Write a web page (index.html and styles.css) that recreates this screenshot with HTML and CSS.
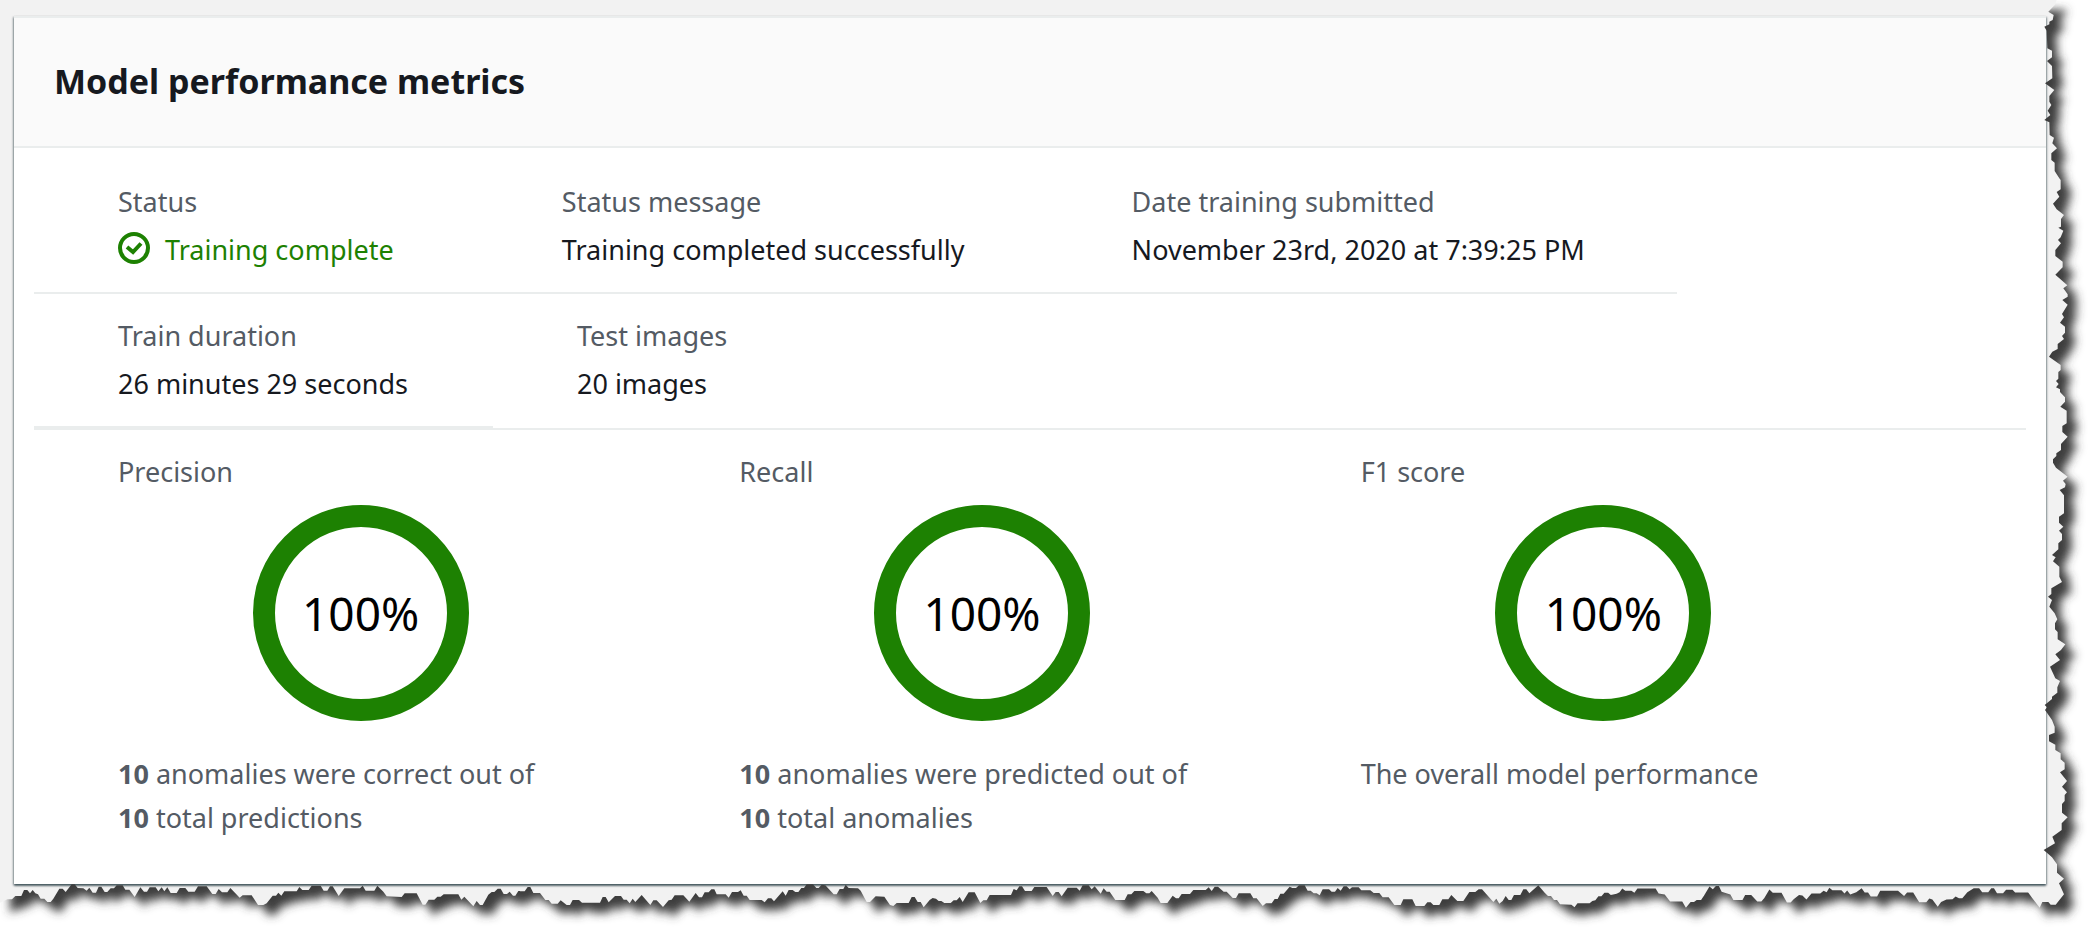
FILE: index.html
```html
<!DOCTYPE html>
<html lang="en">
<head>
<meta charset="utf-8">
<title>Model performance metrics</title>
<link rel="stylesheet" href="styles.css">
</head>
<body>
<main class="page">
  <section class="card">
    <header class="card-header">
      <h2 class="card-title">Model performance metrics</h2>
    </header>
    <div class="card-body">
      <dl class="row row-status">
        <div class="field">
          <dt class="label">Status</dt>
          <dd class="value value-success">
            <svg class="check" viewBox="0 0 32 32" aria-hidden="true">
              <circle cx="16" cy="16" r="14"/>
              <path d="M9 15l6 5 8-8.500"/>
            </svg>
            <span>Training complete</span>
          </dd>
        </div>
        <div class="field">
          <dt class="label">Status message</dt>
          <dd class="value">Training completed successfully</dd>
        </div>
        <div class="field">
          <dt class="label">Date training submitted</dt>
          <dd class="value">November 23rd, 2020 at 7:39:25 PM</dd>
        </div>
      </dl>
      <dl class="row row-duration">
        <div class="field field-ruled">
          <dt class="label">Train duration</dt>
          <dd class="value">26 minutes 29 seconds</dd>
        </div>
        <div class="field">
          <dt class="label">Test images</dt>
          <dd class="value">20 images</dd>
        </div>
      </dl>
      <div class="scores">
        <div class="score">
          <h3 class="label">Precision</h3>
          <div class="ring">100%</div>
          <p class="note"><b>10</b> anomalies were correct out of<br><b>10</b> total predictions</p>
        </div>
        <div class="score">
          <h3 class="label">Recall</h3>
          <div class="ring">100%</div>
          <p class="note"><b>10</b> anomalies were predicted out of<br><b>10</b> total anomalies</p>
        </div>
        <div class="score">
          <h3 class="label">F1 score</h3>
          <div class="ring">100%</div>
          <p class="note">The overall model performance</p>
        </div>
      </div>
    </div>
  </section>
  <svg class="torn-edge" viewBox="0 0 6264 2784" preserveAspectRatio="none" aria-hidden="true">
    <defs>
      <g id="paper">
        <rect x="0" y="0" width="5880" height="2600"/>
        <polygon transform="translate(5880 0)" points="-100,0 290,0 285,14 265,35 281,45 278,60 268,65 268,73 253,80 260,92 262,145 276,152 276,172 261,183 276,198 277,235 255,250 283,270 268,288 268,305 274,315 263,332 271,345 253,360 268,367 269,405 282,413 277,430 291,445 274,460 274,480 284,488 284,513 298,535 302,540 302,568 290,576 298,590 279,611 290,628 312,645 303,657 303,680 295,683 310,692 302,712 294,720 303,730 286,750 286,768 308,785 308,802 286,824 322,856 310,865 323,883 323,890 307,900 -100,900"/>
        <polygon transform="translate(5880 900)" points="-100,0 307,0 323,14 306,42 312,52 300,68 315,80 315,98 306,108 312,117 293,132 293,147 277,155 267,170 302,195 302,210 295,216 295,236 288,243 296,252 288,262 300,268 300,276 315,292 315,305 301,320 320,332 320,370 307,378 307,396 323,410 303,432 303,450 289,460 289,468 279,478 279,488 288,503 323,530 309,542 317,552 315,562 299,570 312,586 312,640 297,650 297,668 310,680 297,692 306,702 306,720 295,730 295,748 276,765 287,772 279,784 298,800 298,830 306,846 274,865 274,882 264,890 276,900 -100,900"/>
        <polygon transform="translate(5880 1800)" points="-100,0 276,0 268,20 284,40 292,58 285,70 285,88 293,96 293,118 316,133 303,150 286,163 300,180 270,200 286,235 300,243 292,262 292,278 276,290 276,297 254,315 261,322 255,330 276,360 284,380 284,398 267,405 267,424 286,434 286,450 302,460 302,478 314,488 314,508 300,517 321,543 306,560 321,577 314,585 314,603 306,612 306,638 323,652 305,670 305,690 277,710 285,730 251,750 276,772 291,793 291,818 312,836 297,850 312,883 287,914 272,914 265,906 247,906 239,923 216,893 204,877 204,780 -100,780"/>
        <polygon transform="translate(0 2520)" points="0,0 0,188 22,178 36,178 46,168 64,168 72,150 82,150 90,160 98,150 106,160 114,163 122,176 133,176 142,186 152,186 160,176 178,146 188,146 197,156 215,133 224,133 233,144 250,145 260,152 268,143 278,158 288,158 296,140 304,140 314,156 322,156 332,145 342,145 350,136 368,136 376,149 388,149 404,171 421,142 432,155 441,155 449,142 467,142 475,154 485,142 493,154 502,142 512,159 530,159 539,144 556,144 565,155 584,155 594,139 620,139 637,162 647,162 656,147 666,157 682,157 691,144 709,163 719,173 728,166 755,166 774,195 790,195 800,190 818,167 828,167 835,158 844,167 853,154 890,154 898,141 907,150 926,150 935,137 962,137 971,152 982,152 990,139 998,139 1016,168 1033,145 1080,145 1088,137 1097,152 1123,152 1132,137 1150,155 1160,169 1205,171 1214,160 1250,160 1268,194 1276,194 1286,179 1303,179 1312,170 1322,170 1331,163 1375,163 1384,179 1393,170 1420,199 1430,183 1440,195 1448,195 1465,164 1475,156 1483,156 1493,146 1502,146 1511,162 1521,162 1529,155 1539,167 1546,167 1555,153 1560,153 1560,0"/>
        <polygon transform="translate(1560 2520)" points="0,0 0,154 14,154 23,141 31,141 40,159 60,159 76,180 86,180 95,191 113,191 122,181 140,195 150,195 158,180 177,180 186,188 240,188 248,171 257,171 266,187 285,168 303,168 311,179 320,179 329,190 338,176 346,186 365,165 391,195 400,181 410,181 429,201 446,181 455,179 464,166 490,166 508,185 527,159 537,172 546,172 554,157 566,157 574,148 583,148 590,163 617,163 626,173 636,156 654,156 662,151 671,167 680,167 689,180 725,180 734,187 744,175 754,175 762,184 788,154 797,167 806,150 818,150 826,156 835,156 844,144 852,144 860,133 879,133 889,144 896,144 905,134 916,136 941,163 950,163 959,147 970,147 977,134 986,144 1014,145 1022,152 1040,186 1050,186 1067,169 1093,170 1110,195 1120,198 1130,189 1166,189 1175,171 1184,171 1193,186 1202,186 1211,202 1229,180 1238,174 1248,176 1256,183 1264,183 1273,189 1292,189 1301,181 1310,181 1319,171 1328,186 1346,157 1364,157 1381,189 1390,181 1400,181 1409,165 1473,165 1481,147 1490,151 1498,139 1506,139 1515,153 1535,153 1543,141 1560,141 1560,0"/>
        <polygon transform="translate(3120 2520)" points="0,0 0,141 20,141 38,168 47,156 56,156 65,169 83,143 110,143 119,152 128,136 146,136 155,148 164,139 182,161 191,145 200,155 209,155 226,180 254,180 263,163 274,163 283,153 310,153 319,160 328,160 335,153 353,173 362,189 382,189 398,167 408,175 416,175 425,162 450,162 460,150 497,150 506,142 515,153 524,140 534,140 551,155 560,155 578,174 588,174 596,160 631,160 640,175 650,175 668,198 678,190 695,190 704,177 713,177 721,161 731,161 749,140 757,144 768,144 777,136 794,136 803,152 812,152 821,160 830,160 839,166 848,148 867,148 875,155 885,155 893,144 902,152 911,139 920,139 929,148 936,142 956,142 964,151 991,151 1001,159 1018,159 1028,172 1046,172 1063,195 1082,195 1090,178 1117,178 1127,198 1153,198 1162,187 1172,187 1180,195 1198,195 1207,178 1225,178 1234,165 1252,183 1270,183 1288,156 1306,156 1316,148 1326,148 1360,186 1369,176 1378,191 1388,183 1397,168 1406,180 1414,180 1422,165 1441,165 1450,148 1459,148 1468,160 1495,136 1514,158 1524,168 1533,168 1542,180 1551,180 1560,193 1560,0"/>
        <polygon transform="translate(4680 2520) scale(1.01)" points="0,0 0,191 34,192 43,200 52,188 88,188 96,181 105,179 114,167 123,167 132,157 143,157 151,163 168,160 177,155 185,144 194,151 212,151 221,157 230,144 284,144 293,159 311,162 327,183 363,183 374,201 388,184 398,184 406,178 419,178 428,165 444,138 454,146 463,137 472,137 480,154 506,162 515,178 542,178 550,163 568,163 586,183 598,183 607,172 622,147 632,157 658,157 674,186 685,186 694,176 710,163 720,165 732,177 747,159 773,159 783,151 792,155 800,142 809,149 836,149 845,159 853,150 862,162 880,155 896,143 905,156 915,156 923,168 942,168 951,151 1004,151 1022,166 1031,156 1049,156 1067,185 1088,185 1097,174 1106,177 1122,198 1132,184 1148,177 1166,176 1175,168 1185,173 1195,173 1210,155 1229,143 1245,143 1254,155 1272,155 1281,143 1289,143 1298,158 1316,158 1325,148 1344,148 1352,156 1392,156 1392,0"/>
      </g>
      <mask id="outside" maskUnits="userSpaceOnUse" x="0" y="0" width="6264" height="2784">
        <rect width="6264" height="2784" fill="#fff"/>
        <use href="#paper" fill="#000"/>
      </mask>
      <filter id="soften" filterUnits="userSpaceOnUse" x="-100" y="-100" width="6464" height="2984">
        <feGaussianBlur stdDeviation="14"/>
      </filter>
    </defs>
    <g mask="url(#outside)">
      <rect width="6264" height="2784" fill="#fff"/>
      <g filter="url(#soften)">
        <use href="#paper" x="30" y="30" fill="#3c3c3c"/>
      </g>
    </g>
  </svg>
</main>
</body>
</html>
```
FILE: styles.css
```css
* {
  box-sizing: border-box;
}

body {
  margin: 0;
  background: #fff;
  color: #16191f;
  font-family: "Noto Sans", "Open Sans", sans-serif;
  font-size: 27px;
  line-height: 44px;
}

h2, h3, p, dl, dd {
  margin: 0;
}

.page {
  position: relative;
  min-height: 100vh;
  padding: 16px 42px 43px 14px;
  background: #f2f2f2;
}

.torn-edge {
  position: absolute;
  inset: 0;
  width: 100%;
  height: 100%;
  pointer-events: none;
}

.card {
  background: #fff;
  border-top: 2px solid #eaeded;
  box-shadow: 0 2px 2px rgba(0, 28, 36, 0.5), 1px 1px 2px rgba(0, 28, 36, 0.3), -1px 1px 2px rgba(0, 28, 36, 0.3);
}

.card-header {
  padding: 41px 40px 43px;
  background: #fafafa;
  border-bottom: 2px solid #eaeded;
}

.card-title {
  font-size: 34px;
  font-weight: 700;
  line-height: 44px;
}

.card-body {
  padding: 32px 20px 44px;
}

.row {
  display: grid;
  border-bottom: 2px solid #eaeded;
}

.row-status {
  width: 82.5%;
  grid-template-columns: 444fr 570fr 630fr;
}

.row-duration {
  grid-template-columns: 459fr 1533fr;
}

.field {
  padding: 0 0 20px 84px;
  white-space: nowrap;
}

.row-duration .field {
  padding-top: 20px;
}

.field-ruled {
  border-bottom: 2px solid #eaeded;
}

.label {
  margin-bottom: 4px;
  color: #545b64;
  font-size: 27px;
  font-weight: 400;
  line-height: 44px;
}

.value-success {
  display: flex;
  align-items: center;
  gap: 15px;
  color: #1d8102;
}

.check {
  width: 32px;
  height: 32px;
  margin-bottom: 4px;
  fill: none;
  stroke: currentColor;
  stroke-width: 4;
}

.scores {
  display: grid;
  grid-template-columns: repeat(3, 1fr);
  padding: 20px 128px 0 0;
}

.score {
  padding: 0 52px 0 84px;
}

.ring {
  display: flex;
  align-items: center;
  justify-content: center;
  width: 216px;
  height: 216px;
  margin: 11px auto 31px;
  border: 22px solid #1d8102;
  border-radius: 50%;
  color: #000;
  font-size: 46px;
}

.note {
  color: #545b64;
}
```
